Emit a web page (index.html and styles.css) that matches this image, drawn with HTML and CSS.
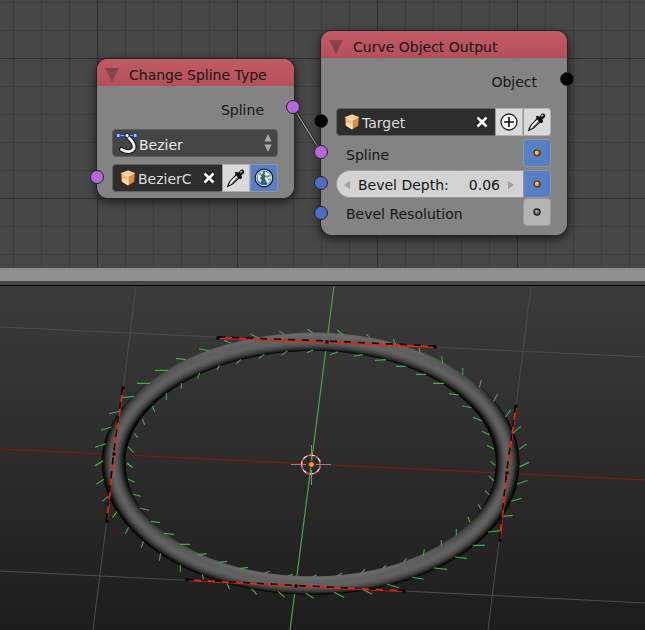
FILE: index.html
```html
<!DOCTYPE html>
<html lang="en">
<head>
<meta charset="utf-8">
<title>Spline nodes</title>
<link rel="stylesheet" href="styles.css">
</head>
<body>
<svg class="sprites" aria-hidden="true">
  <symbol id="cube" viewBox="0 0 18 18">
    <path d="M9 .8 16.3 3.6 15.8 13 9 17.2 2.2 13 1.7 3.6Z" fill="#c98233" stroke="#4a2508" stroke-width="1.2" stroke-linejoin="round"/>
    <path d="M9 1.5 15.5 4 9 7.3 2.5 4Z" fill="#f3cfa0"/>
    <path d="M2.5 4 9 7.3V16.2L2.9 12.4Z" fill="#eeb878"/>
    <path d="M3 8.8 9 12.5V16.2L2.9 12.4Z" fill="#f8dfc0"/>
    <path d="M15.5 4 9 7.3V16.2L15.1 12.4Z" fill="#cf903f"/>
    <path d="M2.5 4 9 7.3 15.5 4M9 7.3V16" fill="none" stroke="#fff0da" stroke-width="1"/>
  </symbol>
  <symbol id="dropper" viewBox="0 0 20 20">
    <path d="M11 6 14 9 6.5 16 3.5 17.5 1.6 18.6 2.6 16 4 13.3Z" fill="#e8e8e8" stroke="#111" stroke-width="1.2" stroke-linejoin="round"/>
    <path d="M5 14 10 9" stroke="#fff" stroke-width="1.5"/>
    <path d="M5.5 15.5 12 9" stroke="#777" stroke-width="1"/>
    <path d="M8.8 4.6 10.5 3.8 12.3 4.7 14.5 2C16.2.3 19.5 2.8 17.8 5.3L15.4 7.5 16.2 9.8 14.6 11.3 12.3 9.9 9.8 7Z" fill="#111"/>
    <path d="M14.2 4.6 16 2.9" stroke="#ccc" stroke-width="1.4"/>
  </symbol>
  <symbol id="cross" viewBox="0 0 14 14">
    <path d="M2.5 2.5 11.5 11.5M11.5 2.5 2.5 11.5" stroke="#111" stroke-width="5"/>
    <path d="M2.5 2.5 11.5 11.5M11.5 2.5 2.5 11.5" stroke="#fff" stroke-width="2.8"/>
  </symbol>
  <symbol id="dot-orange" viewBox="0 0 10 10">
    <circle cx="5" cy="5" r="3" fill="#e58a2e" stroke="#51280b" stroke-width="1.2"/><circle cx="4.5" cy="4.5" r="1.4" fill="#ffc588"/>
  </symbol>
  <symbol id="dot-grey" viewBox="0 0 10 10">
    <circle cx="5" cy="5" r="3" fill="#777" stroke="#222" stroke-width="1.4"/><circle cx="4.5" cy="4.3" r="1.2" fill="#aaa"/>
  </symbol>
</svg>

<main class="screen">
  <section class="nodes" aria-label="Node editor">
    <svg class="link" width="30" height="50" viewBox="0 0 30 50"><path d="M0 0 28 45" stroke="#222" stroke-width="3"/><path d="M0 0 28 45" stroke="#a0a0a0" stroke-width="1.2"/></svg>

    <article class="node node-change">
      <h2 class="title"><span class="fold"></span>Change Spline Type</h2>
      <div class="body">
        <div class="line out">Spline</div>
        <label class="picker">
          <svg class="curve" width="24" height="24" viewBox="0 0 24 24">
            <path d="M3 4.5H21" stroke="#2149b8" stroke-width="3"/><path d="M3 4.5H21" stroke="#7ea4ff" stroke-width="1"/>
            <path d="M12 5C20 12 22 19 14.500 20.500 11.500 21 9 20 6.500 18.500" fill="none" stroke="#181818" stroke-width="5" stroke-linecap="round"/>
            <path d="M12 5C20 12 22 19 14.500 20.500 11.500 21 9 20 6.500 18.500" fill="none" stroke="#f4f4f4" stroke-width="2.800" stroke-linecap="round"/>
            <path d="M1.500 2.500H5V6.500H1.500ZM18.500 2.500H22V6.500H18.500Z" fill="#a9c4ff" stroke="#173da6"/>
            <circle cx="12" cy="4.500" r="2" fill="#fff" stroke="#111" stroke-width=".8"/>
          </svg>
          <select aria-label="Spline type"><option>Bezier</option></select>
          <svg class="updown" width="8" height="20" viewBox="0 0 8 20"><path d="M4 1 7.600 8.500H.4ZM4 19 7.600 11.500H.4Z" fill="#aaa"/></svg>
        </label>
        <div class="line second">
          <div class="field">
            <svg width="18" height="18"><use href="#cube"/></svg>
            <input type="text" value="BezierC" aria-label="Object">
            <button class="clear" aria-label="Clear"><svg width="14" height="14"><use href="#cross"/></svg></button>
          </div>
          <button class="tool" aria-label="Pick object"><svg width="20" height="20"><use href="#dropper"/></svg></button>
          <button class="tool on last" aria-label="World space">
            <svg width="20" height="20" viewBox="0 0 20 20">
              <circle cx="10" cy="10" r="8.800" fill="#2d5f92" stroke="#16202a" stroke-width="1.200"/>
              <circle cx="10" cy="10" r="7.700" fill="none" stroke="#c7e0f2" stroke-width="1"/>
              <path d="M3.500 7 6 4 9.500 3.500 8.500 6 6.500 7 7.500 9 5.500 10 7.500 12 6.500 15 4 12Z" fill="#f3f3dc"/>
              <path d="M11 3.500 15 5 17 9 16 13 13.500 16 12 13 10.500 10 12.500 8 10.500 7Z" fill="#e8eecb"/>
              <path d="M5 7 7 5M12.500 9 15.500 7.500M14 12 15.500 11" stroke="#6b8f3f" stroke-width="1.500"/>
            </svg>
          </button>
        </div>
      </div>
      <i class="socket purple change-out"></i><i class="socket purple change-in"></i>
    </article>

    <article class="node node-output">
      <h2 class="title"><span class="fold"></span>Curve Object Output</h2>
      <div class="body">
        <div class="line out">Object</div>
        <div class="line target">
          <div class="field">
            <svg width="18" height="18"><use href="#cube"/></svg>
            <input type="text" value="Target" aria-label="Target">
            <button class="clear" aria-label="Clear"><svg width="14" height="14"><use href="#cross"/></svg></button>
          </div>
          <button class="tool" aria-label="Add"><svg width="20" height="20" viewBox="0 0 20 20"><circle cx="10" cy="10" r="8" fill="#f5f5f5" stroke="#222" stroke-width="1.300"/><path d="M10 5V15M5 10H15" stroke="#111" stroke-width="1.600"/></svg></button>
          <button class="tool last" aria-label="Pick object"><svg width="20" height="20"><use href="#dropper"/></svg></button>
        </div>
        <div class="line in"><span>Spline</span><button class="tool on single" aria-label="Use spline"><svg width="10" height="10"><use href="#dot-orange"/></svg></button></div>
        <div class="inputs">
          <div class="line">
            <label class="slider"><span class="tri-left"></span><span>Bevel Depth:</span><input type="text" value="0.06"><span class="tri-right"></span></label>
            <button class="tool on last" aria-label="Use bevel depth"><svg width="10" height="10"><use href="#dot-orange"/></svg></button>
          </div>
          <div class="line in"><span>Bevel Resolution</span><button class="tool off single" aria-label="Use bevel resolution"><svg width="10" height="10"><use href="#dot-grey"/></svg></button></div>
        </div>
      </div>
      <i class="socket black object-out"></i><i class="socket black target-in"></i><i class="socket purple spline-in"></i><i class="socket blue depth-in"></i><i class="socket blue resolution-in"></i>
    </article>
  </section>

  <div class="divider"></div>

  <section class="viewport" aria-label="3D view">
    <svg class="scene" viewBox="0 286 645 344" preserveAspectRatio="xMidYMin slice">
      <g fill="none" stroke="#4d4d4d">
        <path d="M136 286 93 630M531 286 488 630M0 327 645 357M0 571 645 603"/>
        <path d="M0 449 645 480" stroke="#8c1414"/>
        <path d="M334 286 290 630" stroke="#43a843" stroke-width="1.200"/>
      </g>
      <g id="tube"></g>
      <g fill="none" stroke="#43ad43" stroke-width="3.300">
        <path transform="translate(95 320) scale(.33333)" d="M467 43 492 54M553 34 567 41M387 61 408 70M312 86 342 92M243 115 273 119M180 151H219M126 190H165M80 233 117 229M42 281 75 274M18 331 50 321M0 382 33 371M0 437 24 423M491 115 508 103M559 106 578 92M424 131 438 118M365 151 373 136M308 175 314 159M259 189V206M214 220V240M173 258 179 275M142 297 149 314M117 340 129 353M99 380 116 398M96 430 113 443"/>
        <path transform="translate(310 320) scale(.33333)" d="M-8 28 8 38M82 30 99 45M169 42 180 54M250 57 258 77M327 83 331 101M395 108 398 131M458 144V165M514 180 508 202M563 222 550 245M602 270 586 291M632 319 608 341M650 372 628 387M657 426 630 440M-10 98 10 90M60 104 84 95M130 109 158 104M195 121 228 119M258 139H288M318 163H348M369 190H402M417 221 446 225M456 257 485 263M489 292 516 302M516 334 538 344M531 376 552 388M541 424 556 436"/>
        <path transform="translate(95 460) scale(.33333)" d="M0 17 23 3M4 73 27 58M22 124 40 109M53 173 66 155M91 221 101 202M139 263 145 244M193 302 197 280M256 315V335M322 343 326 362M395 369 404 388M470 386 485 403M549 394 569 412M632 400 656 415M96 9 113 23M99 57 119 67M114 103 138 109M135 145 162 151M168 184 195 188M207 220 237 223M255 253H285M308 284 335 281M371 307 396 304M434 326 459 322M510 339 524 334M580 347 594 343"/>
        <path transform="translate(310 460) scale(.33333)" d="M628 20 656 8M621 73 653 61M603 124 635 115M580 169 608 166M534 216 573 212M489 256H525M435 291 470 295M372 324 411 328M306 352 341 358M231 373 267 383M157 388 186 402M72 397 102 412M537 48 552 63M525 91 537 105M505 133 513 148M474 171 480 187M439 206V226M394 240V257M343 267 340 287M290 295 281 306M228 316 218 325M165 327 154 340M96 339 82 348M20 346 8 350"/>
      </g>
      <g fill="none">
        <path d="M218 338 327 342 435 347M123 388 114 454 107 521M187 580 296 586 404 591M516 406 507 473 500 540" stroke="#e6240f" stroke-width="1.800"/>
        <path d="M218 337 327 341 435 346M122.500 388 113.500 454 106.500 521M187 579.500 296 585.500 404 590.500M515.500 406 506.500 473 499.500 540" stroke="#000" stroke-width="1.500" stroke-dasharray="7 7"/>
        <path d="M218 338h.01M327 342h.01M435 347h.01M123 388h.01M114 454h.01M107 521h.01M187 580h.01M296 586h.01M404 591h.01M516 406h.01M507 473h.01M500 540h.01" stroke="#000" stroke-width="3" stroke-linecap="square"/>
      </g>
      <g fill="none">
        <circle cx="311" cy="464.500" r="9.500" stroke="#fff" stroke-width="1.200"/>
        <circle cx="311" cy="464.500" r="9.500" stroke="#e02410" stroke-width="1.200" stroke-dasharray="4 4"/>
        <path d="M291 464.500H306M316 464.500H331M311.500 445V459M311.500 470V485" stroke="#888"/>
        <circle cx="311.500" cy="464.500" r="3" fill="#f2953f" stroke="#3b1c08"/>
      </g>
    </svg>
  </section>
</main>
<script src="scene.js"></script>
</body>
</html>
```
FILE: styles.css
```css
* { box-sizing: border-box; }
body { margin: 0; background: #242424; font: 14px/20px "DejaVu Sans", sans-serif; color: #161616; }
button, input, select { font: inherit; color: inherit; border: 0; padding: 0; margin: 0; background: none; }
svg { display: block; flex: none; }
.sprites { position: absolute; width: 0; height: 0; }
.screen { display: flex; flex-direction: column; min-height: 100vh; }

.nodes {
  position: relative; height: 268px; overflow: hidden; background-color: #474747;
  background-image:
    linear-gradient(90deg, #303030 1px, transparent 1px),
    linear-gradient(#303030 1px, transparent 1px),
    linear-gradient(90deg, #3d3d3d 1px, transparent 1px),
    linear-gradient(#3d3d3d 1px, transparent 1px);
  background-size: 140px 140px, 140px 140px, 28px 28px, 28px 28px;
  background-position: 97px 58px, 97px 58px, 13px 2px, 13px 2px;
}
.link { position: absolute; left: 293px; top: 107px; }
.node { position: absolute; border-radius: 11px; background: rgba(136, 136, 136, .93); box-shadow: 0 0 0 1px #252525, 0 3px 8px 2px rgba(0, 0, 0, .5); }
.node-change { left: 97px; top: 59px; width: 197px; }
.node-output { left: 321px; top: 31px; width: 246px; }
.title { display: flex; align-items: center; gap: 10px; height: 27px; margin: 0; padding: 4px 8px 0; border-radius: 11px 11px 0 0; background: linear-gradient(#c35b66, #b54f5a); font-size: 14px; font-weight: 400; }
.fold { border: 7px solid transparent; border-top: 14px solid #87434b; border-bottom: 0; }
.body { padding: 10px 16px 9px 15px; }
.line { display: flex; align-items: center; height: 28px; }
.node-change .body { padding-bottom: 6px; }
.out { justify-content: flex-end; padding-right: 14px; }
.picker { display: flex; align-items: center; height: 28px; margin-top: 5px; padding: 0 5px 0 2px; border: 1px solid #5c5c5c; border-radius: 4px; background: #454545; color: #e8e8e8; }
.picker select { flex: 1; min-width: 0; height: 26px; padding-top: 4px; appearance: none; }
.second { margin-top: 7px; }
.field { display: flex; flex: 1; min-width: 0; align-items: center; align-self: stretch; padding: 0 6px; border: 1px solid #626262; border-right: 0; border-radius: 4px 0 0 4px; background: #2d2d2d; color: #dcdcdc; }
.field input { flex: 1; width: 0; min-width: 0; padding: 2px 0 0 1px; }
.clear { flex: none; }
.tool { display: grid; place-items: center; flex: none; width: 28px; height: 28px; border: 1px solid #b0b0b0; border-left-color: #999; background: #dadada; }
.on { background: #567fc4; border-color: #8d96a6; }
.off { background: #b3b3b3; border-color: #999; }
.last { border-radius: 0 4px 4px 0; }
.single { border-radius: 4px; }
.target { margin-top: 12px; margin-bottom: 3px; }
.in { justify-content: space-between; padding-left: 10px; }
.in span { padding-top: 4px; }
.inputs { margin-top: 3px; }
.slider { display: flex; flex: 1; min-width: 0; align-items: center; gap: 8px; height: 28px; padding: 2px 9px 0 7px; border: 1px solid #999; border-right: 0; border-radius: 14px 0 0 14px; background: #d2d2d2; }
.slider input { flex: 1; width: 0; min-width: 0; text-align: right; }
.tri-left { border: 4px solid transparent; border-right: 6px solid #a0a0a0; border-left: 0; }
.tri-right { border: 4px solid transparent; border-left: 6px solid #a0a0a0; border-right: 0; }

.socket { position: absolute; width: 14px; height: 14px; border: 1px solid #222; border-radius: 50%; }
.purple { background: #b866de; }
.blue { background: #5369c8; }
.black { background: #000; }
.change-out { right: -6px; top: 41px; }
.change-in { left: -7px; top: 111px; }
.object-out { right: -7px; top: 41px; }
.target-in { left: -7px; top: 83px; }
.spline-in { left: -7px; top: 114px; }
.depth-in { left: -7px; top: 145px; }
.resolution-in { left: -7px; top: 175px; }

.divider { height: 18px; background: #464646; border-top: 13px solid #8f8f8f; border-bottom: 1px solid #000; }
.viewport { flex: 1; min-height: 0; background: linear-gradient(#3b3b3b, #1d1d1d); }
.scene { width: 100%; }
```
FILE: scene.js
```javascript
const NS = "http://www.w3.org/2000/svg";
const tube = document.getElementById("tube");
const segments = [
  [[327, 342], [435, 347], [516, 406], [507, 473]],
  [[507, 473], [500, 540], [404, 591], [296, 585]],
  [[296, 585], [187, 580], [107, 521], [114, 454]],
  [[114, 454], [123, 388], [218, 338], [327, 342]]
];
const STEPS = 110;

function make(name, attributes, parent) {
  const element = document.createElementNS(NS, name);
  for (const key in attributes) element.setAttribute(key, attributes[key]);
  parent.appendChild(element);
  return element;
}

function shade(s, nx, ny) {
  const facing = Math.sqrt(1 - s * s);
  const up = s * -ny;
  const lift = up > 0 ? 95 * up ** 3 : 36 * up;
  const falloff = 0.8 + 1.8 * nx * nx;
  return Math.round(Math.max(0, Math.min(106, 98 * facing ** falloff + lift)));
}

// Each slice of the tube is a short stroke across the curve, lit by its normal.
segments.forEach((p, index) => {
  for (let i = 0; i < STEPS; i++) {
    const t = i / STEPS, u = 1 - t;
    const at = k => u * u * u * p[0][k] + 3 * u * u * t * p[1][k] + 3 * u * t * t * p[2][k] + t * t * t * p[3][k];
    const slope = k => u * u * (p[1][k] - p[0][k]) + 2 * u * t * (p[2][k] - p[1][k]) + t * t * (p[3][k] - p[2][k]);
    const x = at(0), y = at(1), dx = slope(0), dy = slope(1);
    const length = Math.hypot(dx, dy), nx = dy / length, ny = -dx / length;
    const r = 9.2 + 2.5 * nx * nx;
    const ends = { x1: x - nx * r, y1: y - ny * r, x2: x + nx * r, y2: y + ny * r };
    const id = "slice" + index + "-" + i;
    const gradient = make("linearGradient", { id, gradientUnits: "userSpaceOnUse", ...ends }, tube);
    for (let k = 0; k <= 12; k++) {
      const s = k / 6 - 1, v = shade(s, nx, ny);
      make("stop", { offset: k / 12, "stop-color": `rgb(${v},${v},${v})` }, gradient);
    }
    make("line", { ...ends, stroke: `url(#${id})`, "stroke-width": 3.6 }, tube);
  }
});
```
